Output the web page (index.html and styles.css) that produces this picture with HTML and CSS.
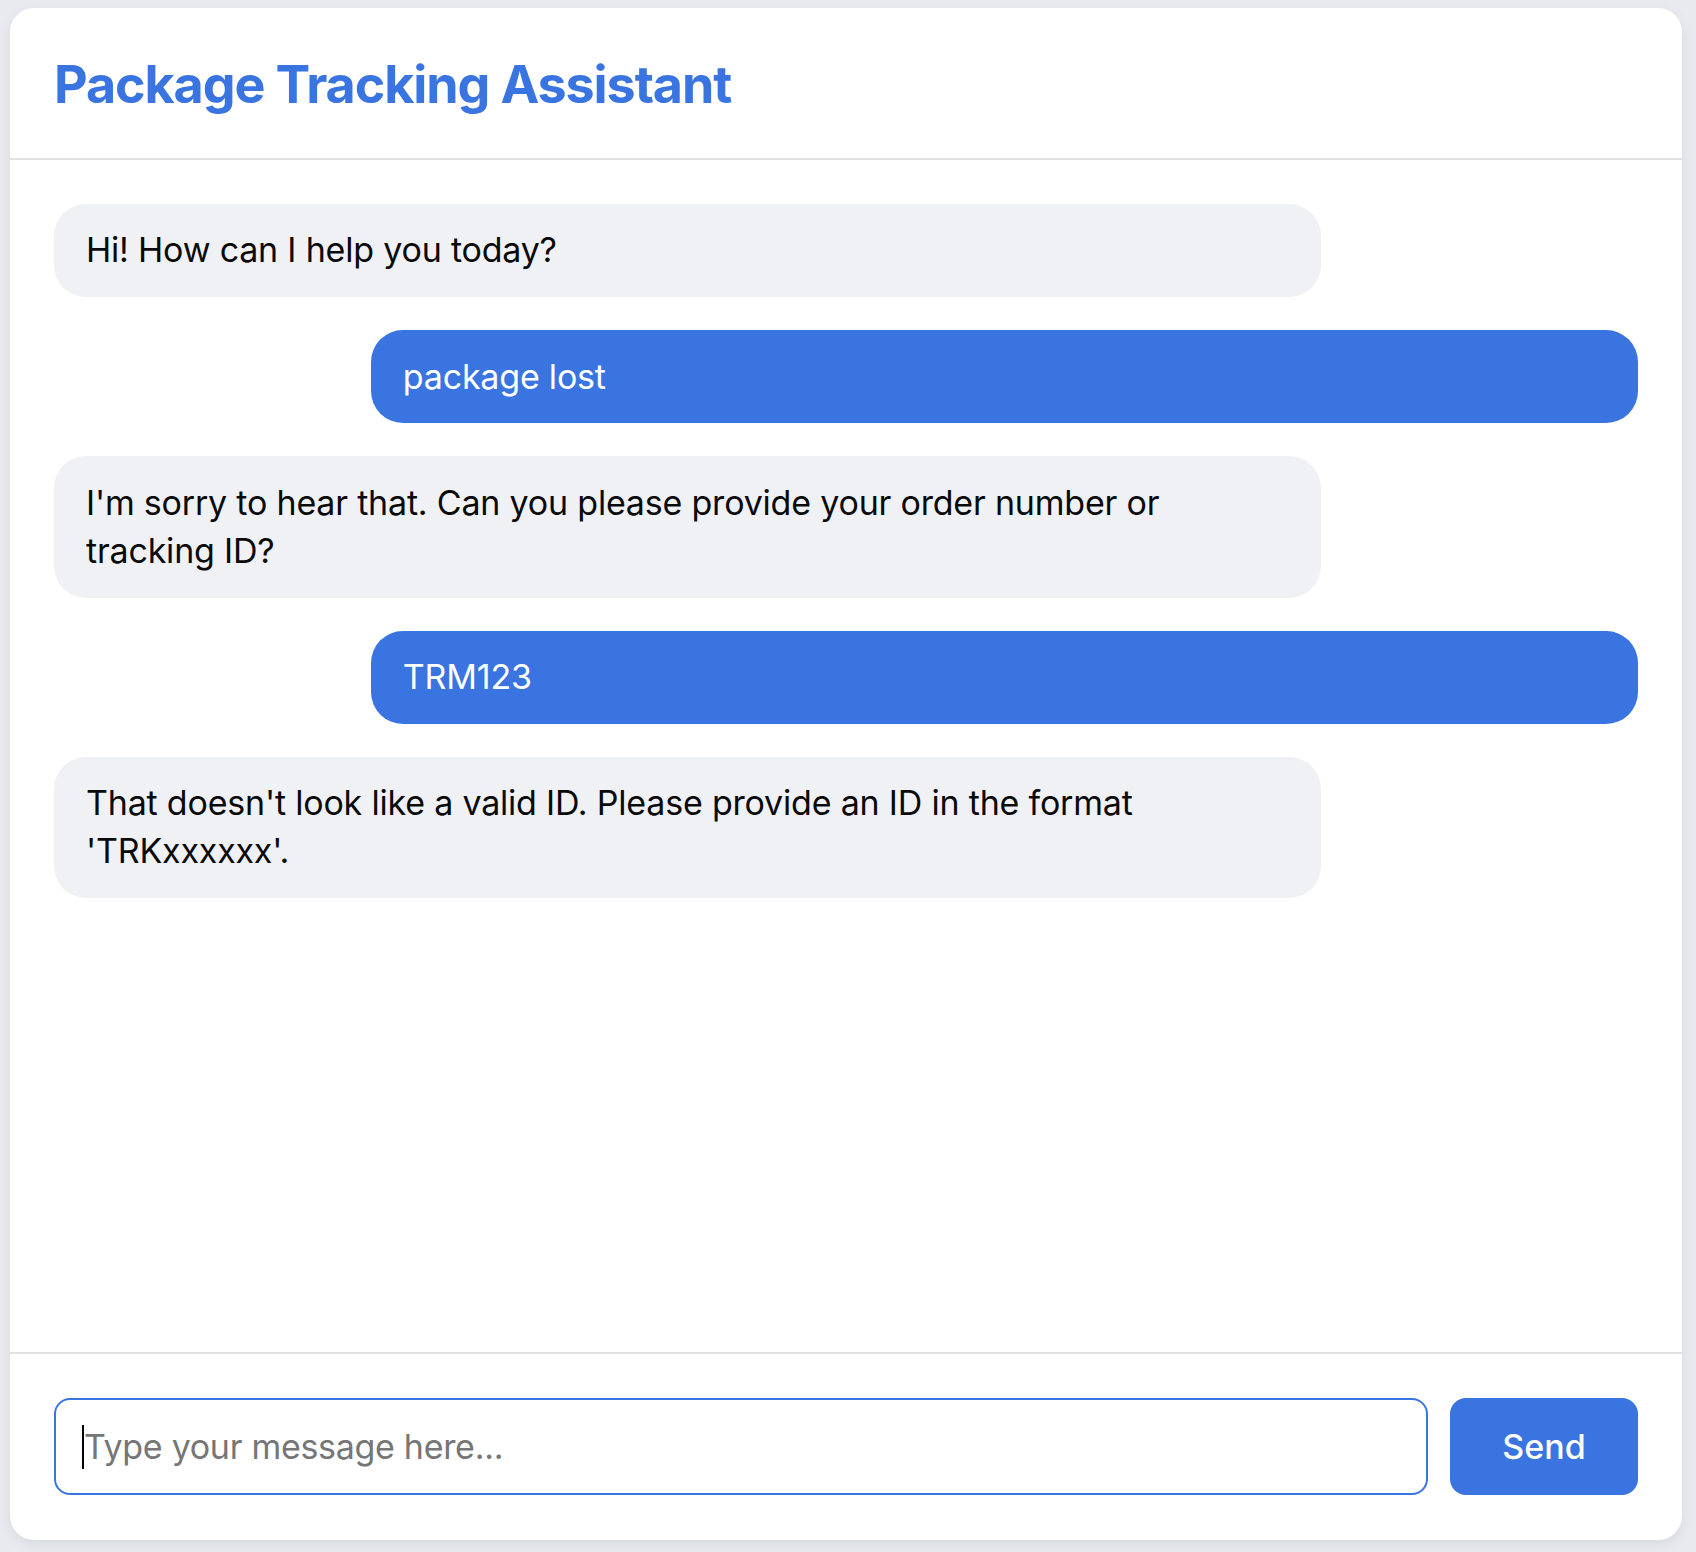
FILE: index.html
```html
<!DOCTYPE html>
<html lang="en">
<head>
<meta charset="utf-8">
<title>Package Tracking Assistant</title>
<link rel="stylesheet" href="styles.css">
</head>
<body>
<div class="chat">
  <header class="chat-header">
    <h1 class="chat-title">Package Tracking Assistant</h1>
  </header>
  <main class="messages">
    <div class="msg msg-bot">Hi! How can I help you today?</div>
    <div class="msg msg-user">package lost</div>
    <div class="msg msg-bot">I'm sorry to hear that. Can you please provide your order number or tracking ID?</div>
    <div class="msg msg-user">TRM123</div>
    <div class="msg msg-bot">That doesn't look like a valid ID. Please provide an ID in the format 'TRKxxxxxx'.</div>
  </main>
  <footer class="composer">
    <div class="input-box"><span class="caret"></span><span class="placeholder">Type your message here...</span></div>
    <button class="send-btn" type="button">Send</button>
  </footer>
</div>
</body>
</html>
```
FILE: styles.css
```css
* { box-sizing: border-box; }
html, body { margin: 0; padding: 0; }
body {
  background: #e9eaef;
  font-family: Inter, "Noto Sans", "Liberation Sans", sans-serif;
  height: 1552px;
  overflow: hidden;
}
.chat {
  margin: 8px 14px 12px 10px;
  height: 1532px;
  background: #ffffff;
  border-radius: 24px;
  box-shadow: 0 4px 14px rgba(0, 0, 0, 0.07);
  display: flex;
  flex-direction: column;
  overflow: hidden;
}
.chat-header {
  padding: 46px 44px 42px;
  border-bottom: 2px solid #e0e0e2;
}
.chat-title {
  margin: 0;
  font-size: 52px;
  line-height: 62px;
  font-weight: 700;
  color: #3a74e0;
  letter-spacing: -1.1px;
}
.messages {
  flex: 1;
  padding: 44px;
  display: flex;
  flex-direction: column;
  gap: 33.2px;
}
.msg {
  width: 80%;
  padding: 22.4px 32px;
  border-radius: 32px;
  font-size: 34px;
  line-height: 48.2px;
  letter-spacing: -0.2px;
}
.msg-bot {
  align-self: flex-start;
  background: #f0f1f5;
  color: #0a0a0a;
}
.msg-user {
  align-self: flex-end;
  background: #3a74e0;
  color: #ffffff;
}
.composer {
  border-top: 2px solid #e0e0e2;
  padding: 44px 44px 45px;
  display: flex;
  gap: 22px;
}
.input-box {
  flex: 1;
  height: 97px;
  border: 2px solid #3a74e0;
  border-radius: 16px;
  padding: 0 26px;
  display: flex;
  align-items: center;
  font-size: 34px;
  color: #767676;
  letter-spacing: -0.3px;
}
.caret {
  width: 2px;
  height: 44px;
  background: #000;
}
.send-btn {
  width: 188px;
  height: 97px;
  border: none;
  border-radius: 16px;
  background: #3a74e0;
  color: #ffffff;
  font-family: Inter, "Noto Sans", "Liberation Sans", sans-serif;
  font-size: 34px;
  font-weight: 500;
}
```
